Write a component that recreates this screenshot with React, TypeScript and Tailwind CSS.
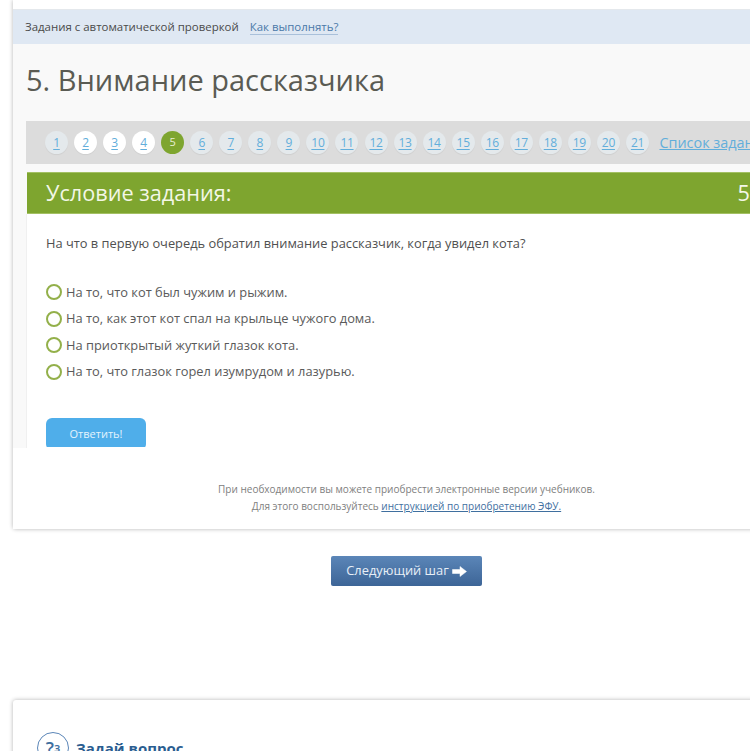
import React from "react";

const pages = Array.from({ length: 21 }, (_, i) => i + 1);
const answers = [
  "На то, что кот был чужим и рыжим.",
  "На то, как этот кот спал на крыльце чужого дома.",
  "На приоткрытый жуткий глазок кота.",
  "На то, что глазок горел изумрудом и лазурью.",
];

const PageDot = ({ n }: { n: number }) => {
  if (n === 5) {
    return (
      <span className="flex h-[23px] w-[23px] shrink-0 items-center justify-center rounded-full bg-[#7ea52f] text-[11px] text-[#e8f0d4]">
        {n}
      </span>
    );
  }
  return (
    <a
      className={`flex h-[23px] w-[23px] shrink-0 items-center justify-center rounded-full text-[12px] tracking-[-0.3px] text-[#62aedb] underline underline-offset-2 shadow-[0_1px_1px_rgba(0,0,0,0.06)] ${
        n > 1 && n < 5 ? "bg-white" : "bg-[#e4e9ec]"
      }`}
    >
      {n}
    </a>
  );
};

export default function App() {
  return (
    <div className="h-[751px] w-[750px] overflow-hidden bg-white font-['Open_Sans',sans-serif]">
      {/* Task card */}
      <div className="ml-[13px] flex h-[529px] w-[900px] flex-col rounded-bl-[3px] bg-[#f9f9f9] shadow-[0_0_4px_rgba(0,0,0,0.3)]">
        <div className="h-[9px] shrink-0 bg-white" />
        <div className="flex h-[35px] shrink-0 items-center gap-[11px] border-t border-[#e4e8ec] bg-[#dfe8f3] pl-[12px] text-[11.45px] text-[#4a4a4a]">
          <span>Задания с автоматической проверкой</span>
          <a className="border-b border-[#a9c0da] leading-[15px] text-[#4a78a8]">Как выполнять?</a>
        </div>

        <h1 className="mt-[15px] ml-[13px] text-[29px] leading-[42px] text-[#5a5b53]">5. Внимание рассказчика</h1>

        <div className="mt-[20px] ml-[13px] flex h-[43px] items-center gap-[6.05px] bg-[#dcdcdc] pl-[19px]">
          {pages.map((n) => (
            <PageDot key={n} n={n} />
          ))}
          <a className="ml-[4.5px] whitespace-nowrap text-[14.4px] text-[#62aedb] underline">Список заданий</a>
        </div>

        <div className="mt-[8px] ml-[14px] flex h-[42px] w-[723px] items-center justify-between border-y border-[#a3c063] bg-[#7ea52f] pl-[19px] text-[21.7px] text-[#f3f7e6]">
          <span>Условие задания:</span>
          <span>5</span>
        </div>

        <div className="ml-[13px] h-[234px] border-l border-[#f0f0f0] bg-white pt-[20px] pl-[19px]">
          <p className="text-[12.85px] leading-[18px] text-[#505050]">
            На что в первую очередь обратил внимание рассказчик, когда увидел кота?
          </p>
          <div className="mt-[31px] flex flex-col gap-[8px]">
            {answers.map((a) => (
              <label key={a} className="flex h-[18.5px] items-center gap-[4px] text-[12.85px] text-[#5a5a5a]">
                <span className="h-[16px] w-[16px] rounded-full border-2 border-[#93b04a] bg-white" />
                {a}
              </label>
            ))}
          </div>
          <div className="mt-[37px] h-[29px] overflow-hidden">
            <button className="h-[32px] w-[100px] rounded-[6px] bg-[#4faeea] text-[11px] text-[#e3f3fd]">Ответить!</button>
          </div>
        </div>

        <div className="flex-1 bg-white pt-[33px] pl-[50px] w-[737px] text-center text-[10px] leading-[17px] text-[#808080]">
          <p>При необходимости вы можете приобрести электронные версии учебников.</p>
          <p>
            Для этого воспользуйтесь <a className="text-[#3f6f9f] underline">инструкцией по приобретению ЭФУ.</a>
          </p>
        </div>
      </div>

      <div className="mt-[27px] ml-[331px]">
        <button className="flex h-[30px] w-[151px] items-center justify-center gap-[3px] rounded-[2px] bg-gradient-to-b from-[#5b86b8] to-[#3d6597] text-[12.85px] text-[#e8eff7]">
          Следующий шаг
          <svg width="15" height="11" viewBox="0 0 15 11">
            <path d="M0.5 3.5h7.5V0.5l6.5 5-6.5 5V7.5H0.5z" fill="#fff" stroke="#fff" strokeWidth="0.5" strokeLinejoin="round" />
          </svg>
        </button>
      </div>

      {/* Ask a question */}
      <div className="mt-[114px] ml-[13px] h-[60px] w-[900px] rounded-tl-[3px] pt-[32px] pl-[24px] shadow-[0_0_4px_rgba(0,0,0,0.3)]">
        <div className="flex items-center gap-[7px]">
          <span className="flex h-[32px] w-[32px] items-center justify-center rounded-full border border-[#5b86b8] text-[18px] font-semibold text-[#3f6f9f]">
            ?<span className="text-[12px]">з</span>
          </span>
          <span className="text-[15px] font-bold text-[#2a5d90]">Задай вопрос</span>
        </div>
      </div>
    </div>
  );
}
